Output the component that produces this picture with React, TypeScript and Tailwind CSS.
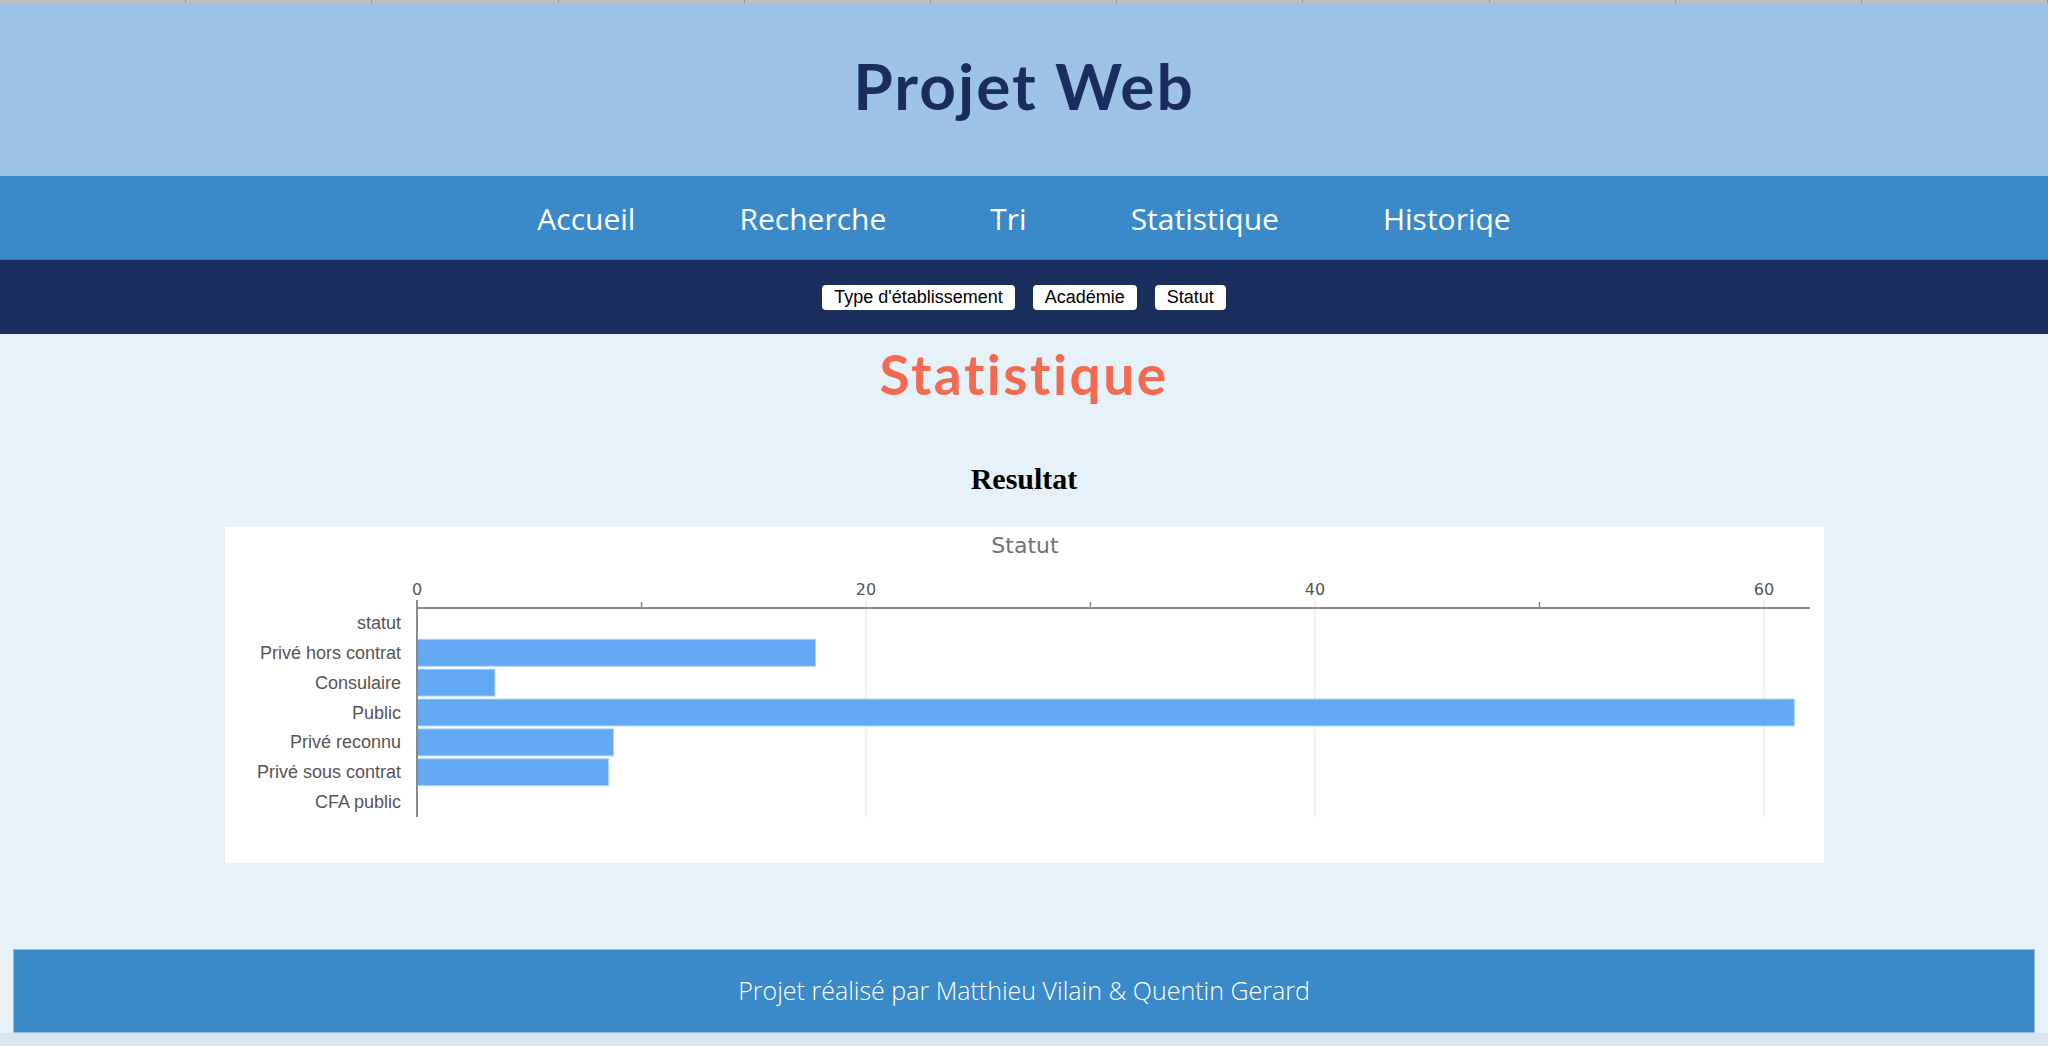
const navItems = ["Accueil", "Recherche", "Tri", "Statistique", "Historiqe"];
const filters = ["Type d'établissement", "Académie", "Statut"];

const rows: { label: string; value: number }[] = [
  { label: "statut", value: 0 },
  { label: "Privé hors contrat", value: 17.75 },
  { label: "Consulaire", value: 3.47 },
  { label: "Public", value: 61.35 },
  { label: "Privé reconnu", value: 8.75 },
  { label: "Privé sous contrat", value: 8.53 },
  { label: "CFA public", value: 0 },
];

// horizontal bar chart, drawn in svg like the chart lib did
function StatutChart() {
  const x0 = 192;
  const unit = 22.45;
  const axisY = 81;
  const bottom = 290;
  const rowH = (bottom - axisY) / rows.length;

  return (
    <svg width={1599} height={336} className="block">
      <text
        x={800}
        y={26}
        textAnchor="middle"
        fill="#727272"
        className="font-['DejaVu_Sans',sans-serif] text-[22px]"
      >
        Statut
      </text>

      {[20, 40, 60].map((v) => (
        <line
          key={v}
          x1={x0 + v * unit}
          x2={x0 + v * unit}
          y1={73}
          y2={bottom}
          stroke="#e2e2e2"
          strokeWidth={1}
        />
      ))}

      {rows.map((r, i) =>
        r.value > 0 ? (
          <rect
            key={r.label}
            x={x0}
            y={axisY + i * rowH + 1.5}
            width={r.value * unit}
            height={rowH - 3}
            fill="#62a8f2"
            stroke="#a9d0f6"
            strokeWidth={1}
          />
        ) : null
      )}

      {rows.map((r, i) => (
        <text
          key={r.label}
          x={176}
          y={axisY + i * rowH + rowH / 2 + 6}
          textAnchor="end"
          fill="#555555"
          className="font-['Liberation_Sans',Arial,sans-serif] text-[18px]"
        >
          {r.label}
        </text>
      ))}

      {[0, 20, 40, 60].map((v) => (
        <text
          key={v}
          x={x0 + v * unit}
          y={68}
          textAnchor="middle"
          fill="#555555"
          className="font-['DejaVu_Sans',sans-serif] text-[16px]"
        >
          {v}
        </text>
      ))}

      {[10, 30, 50].map((v) => (
        <line
          key={v}
          x1={x0 + v * unit}
          x2={x0 + v * unit}
          y1={75}
          y2={axisY}
          stroke="#8a8a8a"
          strokeWidth={1.5}
        />
      ))}

      <line x1={x0} x2={1585} y1={axisY} y2={axisY} stroke="#8a8a8a" strokeWidth={2} />
      <line x1={x0} x2={x0} y1={73} y2={bottom} stroke="#8a8a8a" strokeWidth={2} />
    </svg>
  );
}

export default function App() {
  return (
    <div className="flex h-[1046px] w-[2048px] flex-col overflow-hidden bg-[#e7f1f9]">
      {/* browser tab strip */}
      <div className="flex h-[3px] bg-[#c2c2c2]">
        {Array.from({ length: 11 }).map((_, i) => (
          <div key={i} className="w-[192px] border-r border-[#9a9a9a]" />
        ))}
      </div>

      <header className="h-[173px] bg-[#9dc4e4] pt-[51px] text-center">
        <h1 className="font-['Lato',sans-serif] text-[64px] leading-none font-bold tracking-[2px] text-[#1b2d5c]">
          Projet Web
        </h1>
      </header>

      <nav className="flex h-[84px] items-start justify-center gap-[104px] border-b border-[#2f78b4] bg-[#3a8ac9] pt-[28px]">
        {navItems.map((item) => (
          <a
            key={item}
            className="font-['Open_Sans',sans-serif] text-[30px] leading-none text-white"
          >
            {item}
          </a>
        ))}
      </nav>

      <div className="flex h-[74px] items-center justify-center gap-[18px] bg-[#1b2f5e]">
        {filters.map((f) => (
          <button
            key={f}
            type="button"
            className="h-[25px] rounded-[4px] bg-white px-3 font-['Liberation_Sans',Arial,sans-serif] text-[18px] leading-none text-black"
          >
            {f}
          </button>
        ))}
      </div>

      <main className="flex flex-1 flex-col items-center">
        <h2 className="mt-[13px] font-['Lato',sans-serif] text-[55px] leading-none font-bold tracking-[2.5px] text-[#f26a4f]">
          Statistique
        </h2>
        <h3 className="mt-[62px] font-['Liberation_Serif','Times_New_Roman',serif] text-[30px] leading-none font-bold text-black">
          Resultat
        </h3>
        <div className="mt-[33px] bg-white">
          <StatutChart />
        </div>
      </main>

      <footer className="mx-[13px] flex h-[84px] items-center justify-center border border-[#8fbfe6] bg-[#3a8ac9] font-['Open_Sans',sans-serif] text-[25px] font-light text-white">
        Projet réalisé par Matthieu Vilain &amp; Quentin Gerard
      </footer>
      <div className="h-[13px] bg-[#dbe5ee]" />
    </div>
  );
}
